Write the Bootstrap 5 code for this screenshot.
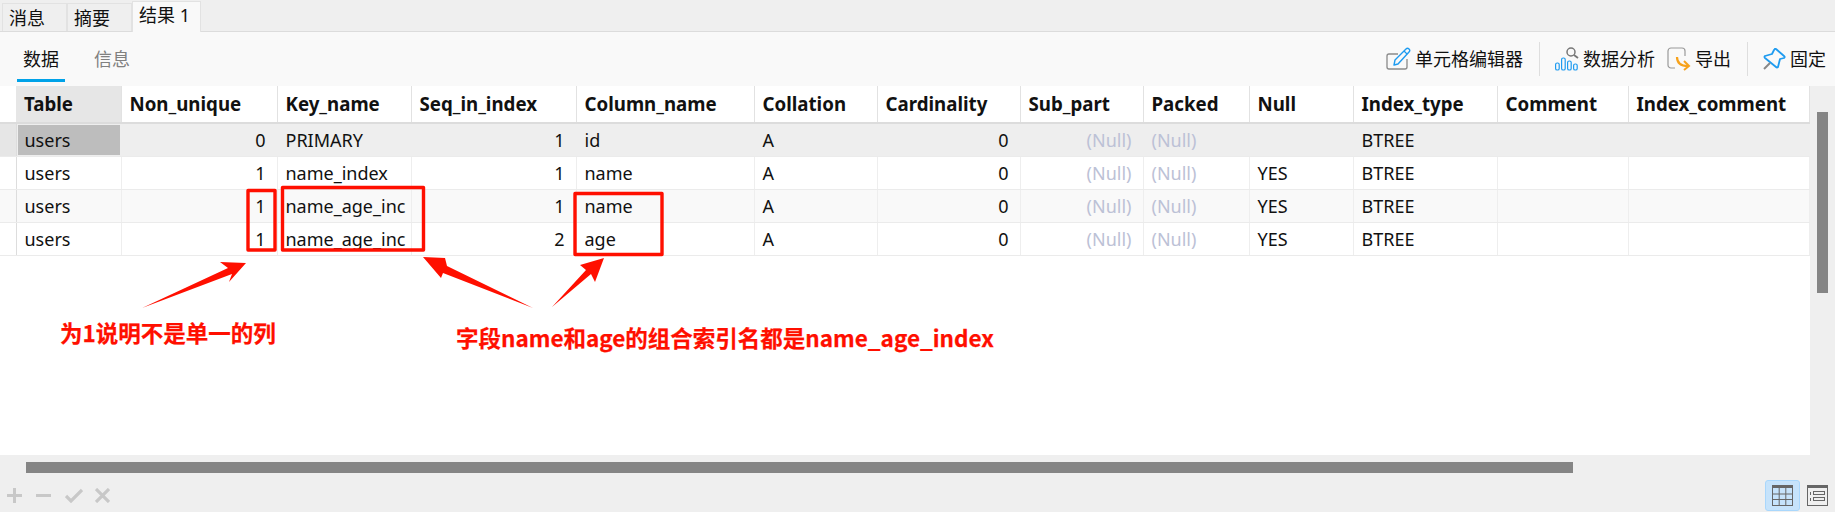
<!doctype html>
<html lang="zh">
<head>
<meta charset="utf-8">
<title>结果 1</title>
<link rel="stylesheet" href="https://cdn.jsdelivr.net/npm/bootstrap@5.3.0/dist/css/bootstrap.min.css">
<style>
html,body{height:512px;overflow:hidden}
body{font-family:"Noto Sans","Noto Sans CJK SC",sans-serif;font-size:18px;color:#111;background:#efefef;position:relative}
.tabbar{height:32px;background:#efefef;border-bottom:1px solid #dcdcdc;padding-left:2px;align-items:flex-end;flex-wrap:nowrap}
.tabbar .nav-link{color:#111;font-size:18px;line-height:20px;padding:0 0 0 6px;border:1px solid #e2e2e2;border-bottom:0;border-radius:0;height:28px;display:flex;align-items:center;background:#efefef;width:65px}
.tabbar .nav-link.active{width:69px;height:31px;background:#f9f9f9;color:#111;padding:0 0 4px 6px;margin-bottom:-1px}
.toolbar{height:54px;background:#f9f9f9;padding-left:17px}
.subtabs{gap:23px}
.subtabs .nav-link{font-size:18px;line-height:24px;padding:0 5px;height:42px;margin-top:3px;display:flex;align-items:center;color:#808080;border-bottom:3px solid transparent;width:48px;justify-content:center}
.subtabs .nav-link.active{color:#111;border-bottom-color:#00a2e8}
.subtabs .nav-link+.nav-link{margin-left:0;width:auto;padding:0}
.tools{padding-right:9px;height:100%}
.tools .btn{font-size:18px;line-height:24px;padding:0;border:0;color:#111;display:flex;align-items:center;gap:4px;border-radius:0}
.tool-sep{width:1px;height:34px;background:#dedede}
.sep-a{margin:0 15px 0 16px}
.sep-b{margin:0 14px 0 16px}
.tools .tool-gap{margin-left:12px}
.main{height:369px;background:#efefef}
.grid-wrap{width:1810px;background:#fff;height:369px;overflow:hidden}
.vtrack{width:25px;padding:26px 0 0 7px}
.vthumb{width:11px;height:181px;background:#858585}
.data-grid{width:1809px;table-layout:fixed;border-collapse:collapse;font-size:18px}
.data-grid th,.data-grid td{padding:0 8px;white-space:nowrap;overflow:hidden;color:#111;background:transparent;line-height:20px;vertical-align:middle}
.data-grid thead th{height:37px;font-size:18.7px;font-weight:700;background:#fff;border-bottom:2px solid #dcdcdc;border-right:1px solid #e2e2e2}
.data-grid thead th.first{background:#e6e6e6}
.data-grid thead th.rh,.data-grid td.rh{padding:0}
.data-grid thead th.rh{border-right:0}
.data-grid tbody td{height:33px;border-bottom:1px solid #ebebeb;border-right:1px solid #eee}
.data-grid td.rh{border-right:1px solid #ddd}
.data-grid tr.sel td{background:#eee}
.data-grid tr.sel td.cur{background:#bdbdbd;box-shadow:inset 0 0 0 1px #eee}
.data-grid tr.sel td.rh{background:#e6e6e6}
.data-grid tr.alt td{background:#f9f9f9}
.data-grid td.num{text-align:right;padding-right:11px}
.data-grid td.nul{color:#bcc1d6}
.footer-area{height:57px;background:#efefef}
.hscroll{height:18px;padding:7px 0 0 26px}
.hthumb{width:1547px;height:11px;background:#858585}
.footer-bar{height:39px;padding:0 7px 1px 7px;align-items:flex-start}
.mini{gap:14px;padding-top:15px}
.mini .x-mark{margin-left:-2px}
.viewbtn{width:35px;height:31px;padding:0;background:#c6e3fb;border:1px solid #a9d7fc;border-radius:3px;display:flex;align-items:center;justify-content:center}
.views{gap:7px;padding-top:7px}
.plainview{width:21px;height:31px;display:flex;align-items:center}
.overlay{position:absolute;left:0;top:0;pointer-events:none}
.note{position:absolute;color:#ff0f00;font-family:"Noto Sans CJK SC","Noto Sans",sans-serif;font-weight:700;font-size:22.5px;line-height:30px;white-space:nowrap;-webkit-text-stroke:.25px #ff0f00}
.note-a{left:60px;top:317px}
.note-b{left:456px;top:322px}
</style>
</head>
<body>
<ul class="nav tabbar">
  <li class="nav-item"><a class="nav-link" href="#">消息</a></li>
  <li class="nav-item"><a class="nav-link" href="#">摘要</a></li>
  <li class="nav-item"><a class="nav-link active" href="#">结果 1</a></li>
</ul>
<div class="toolbar d-flex justify-content-between align-items-center">
  <ul class="nav subtabs">
    <li class="nav-item"><a class="nav-link active" href="#">数据</a></li>
    <li class="nav-item"><a class="nav-link" href="#">信息</a></li>
  </ul>
  <div class="tools d-flex align-items-center">
    <button class="btn" type="button">
      <svg width="25" height="24" viewBox="0 0 25 24" fill="none"><path d="M12 7H3a2 2 0 0 0-2 2v11a2 2 0 0 0 2 2h16a2 2 0 0 0 2-2v-8" stroke="#8a8a8a" stroke-width="1.3"/><path d="M8 18l1-5L20 2c1-1 2-1 3 0s1 2 0 3L12 17z" fill="#f9f9f9" stroke="#1e9bf0" stroke-width="1.4" stroke-linejoin="round"/><path d="M18 4l3 3" stroke="#1e9bf0" stroke-width="1.2"/></svg>
      <span>单元格编辑器</span>
    </button>
    <span class="tool-sep sep-a"></span>
    <button class="btn" type="button">
      <svg width="24" height="24" viewBox="0 0 24 24" fill="none"><g stroke="#1e9bf0" stroke-width="1.2"><rect x=".6" y="16" width="3.6" height="7" rx="1.6"/><rect x="6.6" y="11" width="3.6" height="12" rx="1.6"/><rect x="12.6" y="14" width="3.6" height="9" rx="1.6"/><rect x="18.6" y="17" width="3.6" height="6" rx="1.6"/></g><circle cx="16" cy="5" r="4" stroke="#777" stroke-width="1.5"/><path d="M19 8l4 3" stroke="#777" stroke-width="1.8"/></svg>
      <span>数据分析</span>
    </button>
    <button class="btn tool-gap" type="button">
      <svg width="24" height="24" viewBox="0 0 24 24" fill="none"><path d="M8 21H4a3 3 0 0 1-3-3V4a3 3 0 0 1 3-3h11a3 3 0 0 1 3 3v5" stroke="#999" stroke-width="1.2"/><path d="M10 10c0 6 3 9 11 9" stroke="#f7a21b" stroke-width="2.2"/><path d="M17 14l5 5-5 4" stroke="#f7a21b" stroke-width="2"/></svg>
      <span>导出</span>
    </button>
    <span class="tool-sep sep-b"></span>
    <button class="btn" type="button">
      <svg width="24" height="22" viewBox="0 0 24 22" fill="none"><path d="M14 1l8 7c1 1 1 1 0 2l-4 1-2 8c-1 1-1 1-2 0L3 10c-1-1-1-1 0-2l7-2 2-4c1-1 1-2 2-1z" stroke="#1e9bf0" stroke-width="1.8" stroke-linejoin="round"/><path d="M8 15l-6 6" stroke="#888" stroke-width="2"/></svg>
      <span>固定</span>
    </button>
  </div>
</div>
<div class="main d-flex">
  <div class="grid-wrap">
    <table class="table mb-0 data-grid">
      <colgroup>
        <col style="width:16px"><col style="width:105px"><col style="width:156px"><col style="width:134px"><col style="width:165px"><col style="width:178px"><col style="width:123px"><col style="width:143px"><col style="width:123px"><col style="width:106px"><col style="width:104px"><col style="width:144px"><col style="width:131px"><col style="width:181px">
      </colgroup>
      <thead><tr><th class="rh"></th><th class="first">Table</th><th>Non_unique</th><th>Key_name</th><th>Seq_in_index</th><th>Column_name</th><th>Collation</th><th>Cardinality</th><th>Sub_part</th><th>Packed</th><th>Null</th><th>Index_type</th><th>Comment</th><th>Index_comment</th></tr></thead>
      <tbody>
        <tr class="sel"><td class="rh"></td><td class="cur">users</td><td class="num">0</td><td>PRIMARY</td><td class="num">1</td><td>id</td><td>A</td><td class="num">0</td><td class="num nul">(Null)</td><td class="nul">(Null)</td><td></td><td>BTREE</td><td></td><td></td></tr>
        <tr><td class="rh"></td><td>users</td><td class="num">1</td><td>name_index</td><td class="num">1</td><td>name</td><td>A</td><td class="num">0</td><td class="num nul">(Null)</td><td class="nul">(Null)</td><td>YES</td><td>BTREE</td><td></td><td></td></tr>
        <tr class="alt"><td class="rh"></td><td>users</td><td class="num">1</td><td>name_age_inc</td><td class="num">1</td><td>name</td><td>A</td><td class="num">0</td><td class="num nul">(Null)</td><td class="nul">(Null)</td><td>YES</td><td>BTREE</td><td></td><td></td></tr>
        <tr><td class="rh"></td><td>users</td><td class="num">1</td><td>name_age_inc</td><td class="num">2</td><td>age</td><td>A</td><td class="num">0</td><td class="num nul">(Null)</td><td class="nul">(Null)</td><td>YES</td><td>BTREE</td><td></td><td></td></tr>
      </tbody>
    </table>
  </div>
  <div class="vtrack"><div class="vthumb"></div></div>
</div>
<div class="footer-area">
  <div class="hscroll"><div class="hthumb"></div></div>
  <div class="footer-bar d-flex justify-content-between">
    <div class="mini d-flex">
      <svg width="15" height="15" viewBox="0 0 15 15"><path d="M7.5 0v15M0 7.5h15" stroke="#c8c8c8" stroke-width="3"/></svg>
      <svg width="15" height="15" viewBox="0 0 15 15"><path d="M0 7.5h15" stroke="#c8c8c8" stroke-width="3"/></svg>
      <svg width="18" height="15" viewBox="0 0 18 15" fill="none"><path d="M1 8l5 5L17 2" stroke="#c8c8c8" stroke-width="3.2"/></svg>
      <svg width="15" height="15" viewBox="0 0 15 15" class="x-mark"><path d="M1 1l13 13M14 1L1 14" stroke="#c8c8c8" stroke-width="3.2"/></svg>
    </div>
    <div class="views d-flex">
      <button class="viewbtn" type="button" aria-label="表格视图">
        <svg width="21" height="21" viewBox="0 0 21 21" fill="none"><rect x=".5" y=".5" width="20" height="20" stroke="#666"/><rect width="21" height="3" fill="#666"/><path d="M7.2 3v17M13.8 3v17M1 9h19M1 14.500h19" stroke="#666"/></svg>
      </button>
      <span class="plainview">
        <svg width="21" height="21" viewBox="0 0 21 21" fill="none"><rect x=".5" y=".5" width="20" height="20" stroke="#666"/><rect width="21" height="3" fill="#666"/><path d="M3.500 7v3M3.500 13v3" stroke="#666"/><rect x="6.500" y="6.500" width="11" height="3" stroke="#666"/><rect x="6.500" y="12.500" width="11" height="3" stroke="#666"/></svg>
      </span>
    </div>
  </div>
</div>
<svg class="overlay" width="1835" height="512" viewBox="0 0 1835 512" fill="none">
  <g stroke="#ff0f00" stroke-width="3.4" stroke-linejoin="round">
    <rect x="248" y="190.500" width="27" height="59.500"/>
    <rect x="282.500" y="187.500" width="141" height="62.500"/>
    <rect x="575" y="193.500" width="87" height="61"/>
  </g>
  <g fill="#ff0f00">
    <path d="M142 308L228 268 220 262 246 263 229 282 232 274z"/>
    <path d="M533 308L447 266 445 258 423 257 441 278 443 273z"/>
    <path d="M552 307L586 270 580 265 604 258 595 282 591 274z"/>
  </g>
</svg>
<span class="note note-a">为1说明不是单一的列</span>
<span class="note note-b">字段name和age的组合索引名都是name_age_index</span>
<script src="https://cdn.jsdelivr.net/npm/bootstrap@5.3.0/dist/js/bootstrap.bundle.min.js"></script>
</body>
</html>
